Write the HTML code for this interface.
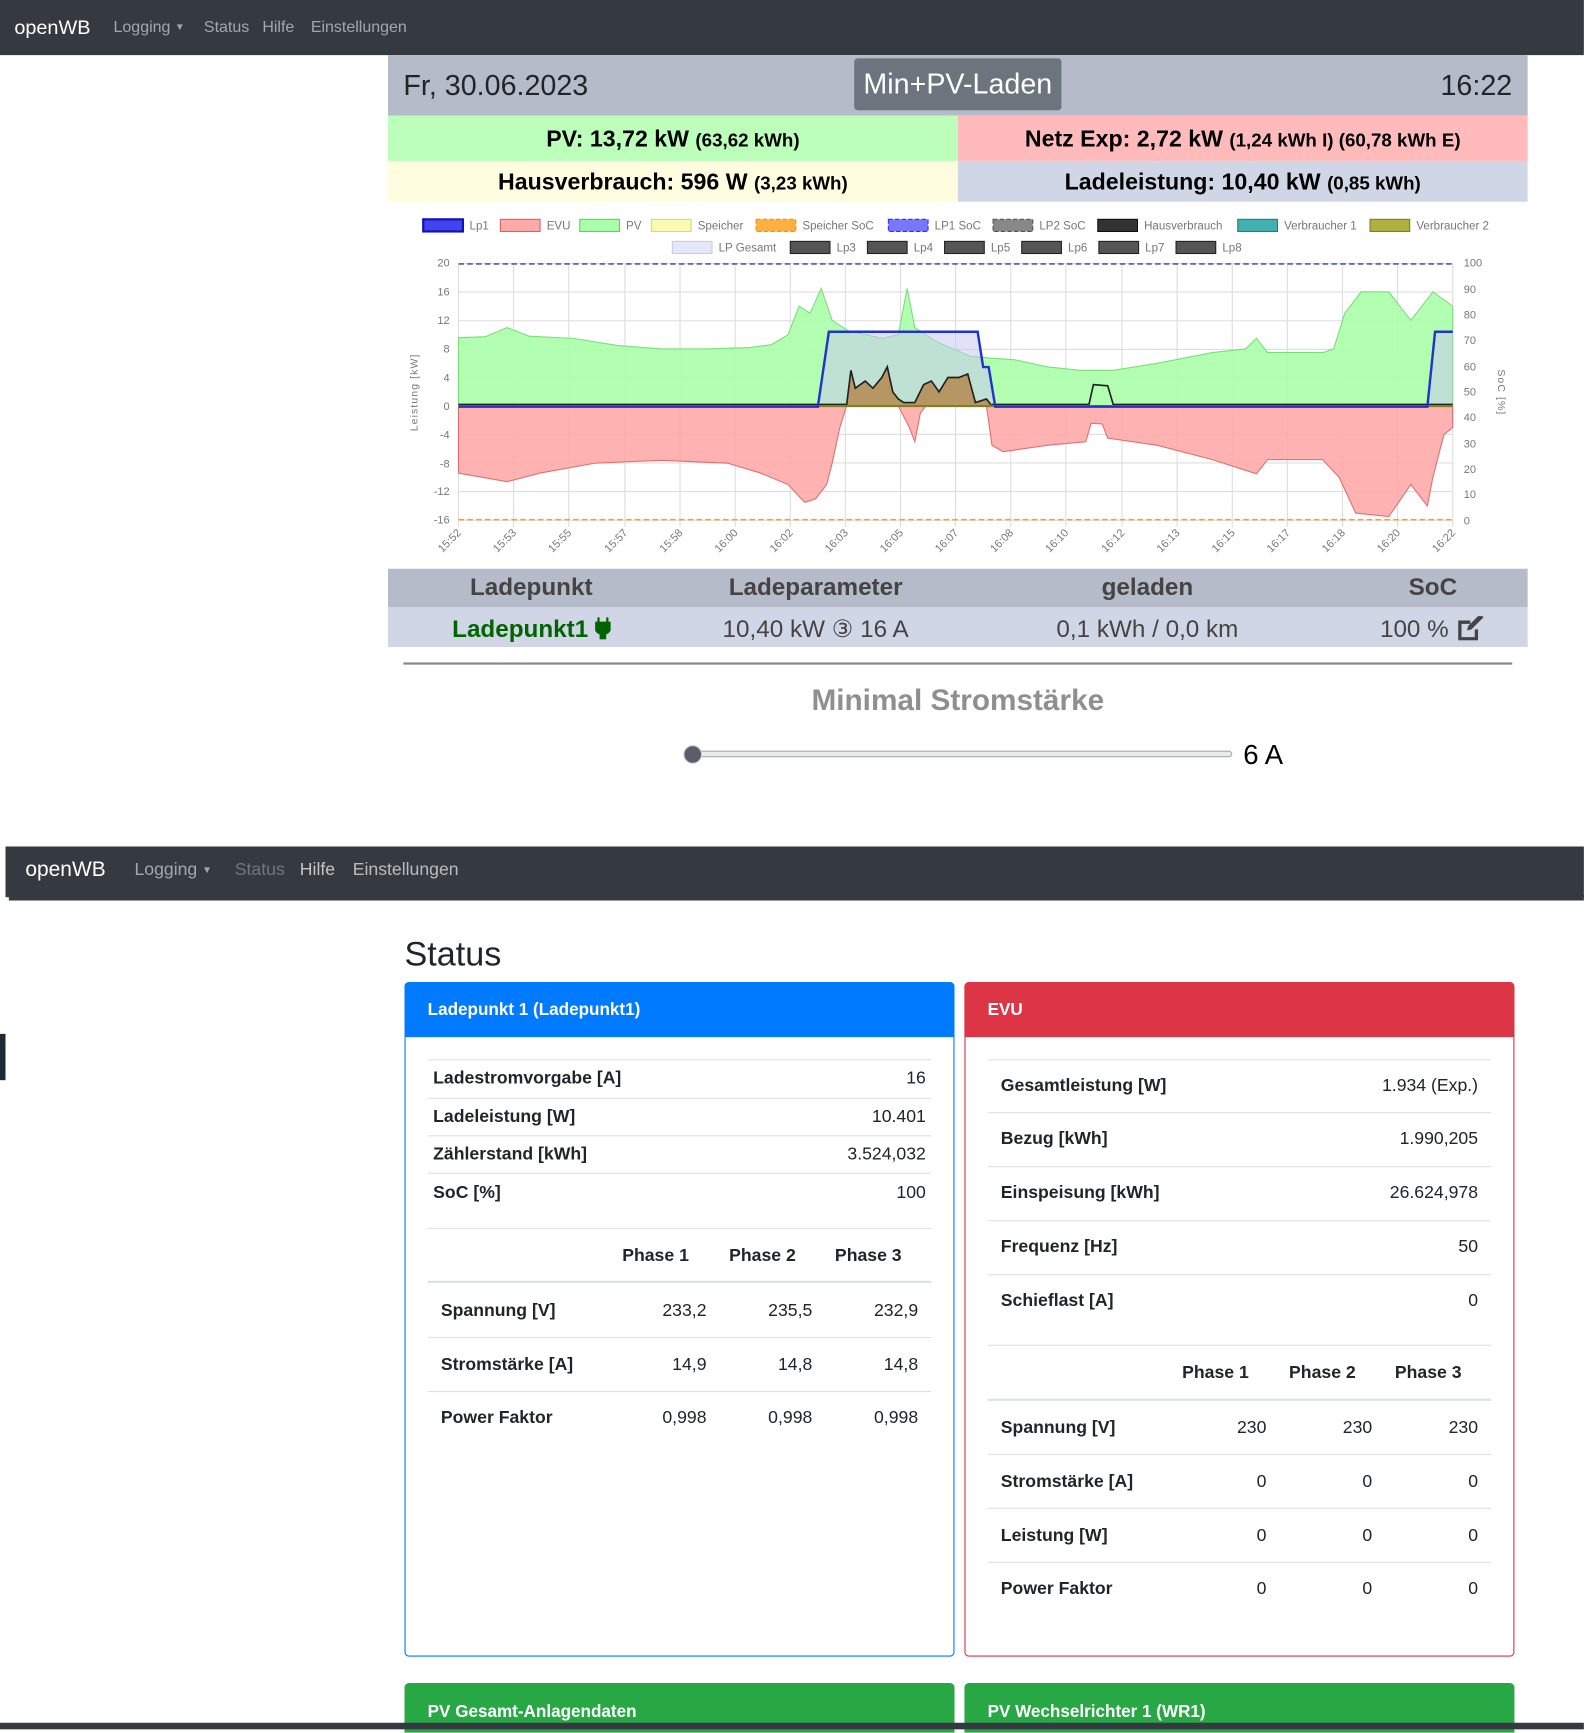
<!DOCTYPE html>
<html><head><meta charset="utf-8">
<style>
*{box-sizing:border-box;margin:0;padding:0}
html,body{width:1584px;height:1728px;overflow:hidden;background:#fff}
#w{position:absolute;left:0;top:0;width:1437px;height:1568px;transform:scale(1.1022);transform-origin:0 0;font-family:"Liberation Sans",sans-serif;color:#212529}
.a{position:absolute;white-space:nowrap}
.nav{position:absolute;background:#343a40}
.nl{color:rgba(255,255,255,.55)}
.c{text-align:center}
.b{font-weight:bold}
.ln{position:absolute;height:1px;background:#dee2e6}
.ln2{position:absolute;height:2px;background:#dee2e6}
.t{position:absolute;font-size:16px;white-space:nowrap}
.r{text-align:right}
</style></head><body><div id="w">

<!-- navbar 1 -->
<div class="nav" style="left:0;top:0;width:1437px;height:50px"></div>
<div class="a" style="left:13px;top:15px;font-size:18px;color:#fff">openWB</div>
<div class="a nl" style="left:103px;top:17px;font-size:14.5px">Logging <span style="font-size:9px;vertical-align:2px">▼</span></div>
<div class="a nl" style="left:185px;top:17px;font-size:14.5px">Status</div>
<div class="a nl" style="left:238px;top:17px;font-size:14.5px">Hilfe</div>
<div class="a nl" style="left:282px;top:17px;font-size:14.5px">Einstellungen</div>

<!-- header panel -->
<div class="a" style="left:352px;top:50px;width:1034px;height:55px;background:#b6bbc9"></div>
<div class="a" style="left:366px;top:62px;font-size:26px">Fr, 30.06.2023</div>
<div class="a" style="left:775px;top:53px;width:188px;height:47px;background:#6c757d;border-radius:3px;color:#fff;font-size:26px;text-align:center;line-height:47px">Min+PV-Laden</div>
<div class="a" style="left:1300px;top:62px;width:72px;text-align:right;font-size:26px">16:22</div>
<div class="a c b" style="left:352px;top:105px;width:517px;height:41px;background:#bbffbb;line-height:43px;font-size:21px;color:#000">PV: 13,72 kW <span style="font-size:17px">(63,62 kWh)</span></div>
<div class="a c b" style="left:869px;top:105px;width:517px;height:41px;background:#ffbbbb;line-height:43px;font-size:21px;color:#000">Netz Exp: 2,72 kW <span style="font-size:17px">(1,24 kWh I) (60,78 kWh E)</span></div>
<div class="a c b" style="left:352px;top:146px;width:517px;height:37px;background:#fffde0;line-height:40px;font-size:21px;color:#000">Hausverbrauch: 596 W <span style="font-size:17px">(3,23 kWh)</span></div>
<div class="a c b" style="left:869px;top:146px;width:517px;height:37px;background:#d0d6e5;line-height:40px;font-size:21px;color:#000">Ladeleistung: 10,40 kW <span style="font-size:17px">(0,85 kWh)</span></div>

<!-- chart -->
<svg class="a" style="left:0;top:0" width="1437" height="520" viewBox="0 0 1437 520" font-family="Liberation Sans" font-size="10" fill="#666">
<g font-size="10.5" fill="#777">
<rect x="384" y="199" width="36" height="11" fill="#4444ee" stroke="#1010c0" stroke-width="2"/><text x="426" y="208">Lp1</text>
<rect x="454" y="199" width="36" height="11" fill="#ffaaaa" stroke="#e06060"/><text x="496" y="208">EVU</text>
<rect x="526" y="199" width="36" height="11" fill="#aaffaa" stroke="#60d060"/><text x="568" y="208">PV</text>
<rect x="591" y="199" width="36" height="11" fill="#fbfbb0" stroke="#d8d880"/><text x="633" y="208">Speicher</text>
<rect x="686" y="199" width="36" height="11" fill="#ffb040" stroke="#f09020" stroke-dasharray="4,2"/><text x="728" y="208">Speicher SoC</text>
<rect x="806" y="199" width="36" height="11" fill="#7777ff" stroke="#3333dd" stroke-dasharray="4,2"/><text x="848" y="208">LP1 SoC</text>
<rect x="901" y="199" width="36" height="11" fill="#888" stroke="#555" stroke-dasharray="4,2"/><text x="943" y="208">LP2 SoC</text>
<rect x="996" y="199" width="36" height="11" fill="#333" stroke="#111"/><text x="1038" y="208">Hausverbrauch</text>
<rect x="1123" y="199" width="36" height="11" fill="#40b0b0" stroke="#208080"/><text x="1165" y="208">Verbraucher 1</text>
<rect x="1243" y="199" width="36" height="11" fill="#b0b040" stroke="#808020"/><text x="1285" y="208">Verbraucher 2</text>
<rect x="610" y="219" width="36" height="11" fill="#e6e6fa" stroke="#ccd"/><text x="652" y="228">LP Gesamt</text>
<g fill="#555" stroke="#222"><rect x="717" y="219" width="36" height="11"/><rect x="787" y="219" width="36" height="11"/><rect x="857" y="219" width="36" height="11"/><rect x="927" y="219" width="36" height="11"/><rect x="997" y="219" width="36" height="11"/><rect x="1067" y="219" width="36" height="11"/></g>
<text x="759" y="228">Lp3</text><text x="829" y="228">Lp4</text><text x="899" y="228">Lp5</text><text x="969" y="228">Lp6</text><text x="1039" y="228">Lp7</text><text x="1109" y="228">Lp8</text>
</g>
<g stroke="#ddd" stroke-width="1">
<path d="M416,239H1318M416,265H1318M416,291H1318M416,317H1318M416,342H1318M416,368H1318M416,394H1318M416,420H1318M416,446H1318M416,472H1318"/>
<path d="M416,239V478M466,239V478M516,239V478M567,239V478M617,239V478M667,239V478M717,239V478M767,239V478M817,239V478M867,239V478M917,239V478M967,239V478M1018,239V478M1068,239V478M1118,239V478M1168,239V478M1218,239V478M1268,239V478M1318,239V478"/>
</g>
<path d="M416,306.3L440,305.6L460,297.2L480,305L520,307L560,313.4L600,316.6L640,316.6L680,315.3L700,312.7L715,303.7L725,277.8L735,284.3L745,261.6L755,290.7L770,300.4L800,306.9L815,303.7L823,261.6L830,297.2L850,310.2L880,323.1L900,325L920,326.3L950,332.8L980,336L1010,336L1050,329.6L1100,319.9L1130,316.6L1140,306.9L1150,319.9L1200,319.9L1210,316.6L1220,284.3L1235,264.8L1260,264.8L1280,290.7L1300,264.8L1318,277.8L1318,368.4L416,368.4Z" fill="#aaffaa" fill-opacity=".9" stroke="#7ddc7d"/>
<path d="M416,429.2L460,437L490,429.2L540,420.2L600,417.6L660,420.2L690,429.2L715,439.6L730,455.8L740,452.5L750,439.6L755,420.2L762,387.8L768,368.4L815,368.4L825,387.8L830,400.8L835,374.9L840,368.4L895,368.4L900,404L910,409.8L950,404L985,400.8L990,384L1000,384.6L1005,397.5L1050,404L1100,417L1140,429.9L1150,417L1200,417L1215,433.1L1230,465.5L1260,468.7L1280,439.6L1295,459L1300,433.1L1310,394.3L1318,387.8L1318,368.4L416,368.4Z" fill="#ffaaaa" fill-opacity=".9" stroke="#e07070"/>
<path d="M742,368.4L752,300.4L887,300.4L892,332.8L897,332.8L903,368.4ZM1295,368.4L1302,300.4L1318,300.4L1318,368.4Z" fill="#c8c8f0" fill-opacity=".55"/>
<path d="M768,368.4L772,336L776,352.2L785,345.7L792,352.2L800,342.5L805,332.8L810,355.5L815,362L820,365.2L830,365.2L838,349L845,345.7L852,355.5L860,342.5L870,342.5L878,339.3L885,365.2L895,362L900,368.4Z" fill="#b58a50" fill-opacity=".85" stroke="#222" stroke-width="1.5"/>
<path d="M416,367L768,367M900,367L988,367L992,349L1005,350L1010,367L1318,367" fill="none" stroke="#222" stroke-width="1.5"/>
<path d="M416,368.4H1318" stroke="#808020" stroke-width="2"/>
<path d="M416,369L742,369L752,301L887,301L892,333L897,333L903,369L1295,369L1302,301L1318,301" fill="none" stroke="#2233cc" stroke-width="2.2"/>
<path d="M416,239.5H1318" stroke="#5555bb" stroke-width="1.5" stroke-dasharray="5,3"/>
<path d="M416,471.5H1318" stroke="#f0a040" stroke-width="1.5" stroke-dasharray="5,3"/>
<g text-anchor="end" fill="#777">
<text x="408" y="242">20</text><text x="408" y="268">16</text><text x="408" y="294">12</text><text x="408" y="320">8</text><text x="408" y="346">4</text><text x="408" y="372">0</text><text x="408" y="398">-4</text><text x="408" y="424">-8</text><text x="408" y="449">-12</text><text x="408" y="475">-16</text>
</g>
<g fill="#777">
<text x="1328" y="242">100</text><text x="1328" y="266">90</text><text x="1328" y="289">80</text><text x="1328" y="312">70</text><text x="1328" y="336">60</text><text x="1328" y="359">50</text><text x="1328" y="382">40</text><text x="1328" y="406">30</text><text x="1328" y="429">20</text><text x="1328" y="452">10</text><text x="1328" y="476">0</text>
</g>
<text transform="translate(379,356) rotate(-90)" text-anchor="middle" fill="#777" font-size="9.5" letter-spacing="1">Leistung [kW]</text>
<text transform="translate(1359,356) rotate(90)" text-anchor="middle" fill="#777" font-size="9.5" letter-spacing="1">SoC [%]</text>
<g fill="#777" text-anchor="end" font-size="10">
<text transform="translate(419,484) rotate(-45)">15:52</text><text transform="translate(469,484) rotate(-45)">15:53</text><text transform="translate(519,484) rotate(-45)">15:55</text><text transform="translate(570,484) rotate(-45)">15:57</text><text transform="translate(620,484) rotate(-45)">15:58</text><text transform="translate(670,484) rotate(-45)">16:00</text><text transform="translate(720,484) rotate(-45)">16:02</text><text transform="translate(770,484) rotate(-45)">16:03</text><text transform="translate(820,484) rotate(-45)">16:05</text><text transform="translate(870,484) rotate(-45)">16:07</text><text transform="translate(920,484) rotate(-45)">16:08</text><text transform="translate(970,484) rotate(-45)">16:10</text><text transform="translate(1021,484) rotate(-45)">16:12</text><text transform="translate(1071,484) rotate(-45)">16:13</text><text transform="translate(1121,484) rotate(-45)">16:15</text><text transform="translate(1171,484) rotate(-45)">16:17</text><text transform="translate(1221,484) rotate(-45)">16:18</text><text transform="translate(1271,484) rotate(-45)">16:20</text><text transform="translate(1321,484) rotate(-45)">16:22</text>
</g>
</svg>

<!-- ladepunkt table -->
<div class="a" style="left:352px;top:516px;width:1034px;height:35px;background:#b6bbc9"></div>
<div class="a" style="left:352px;top:551px;width:1034px;height:36px;background:#d0d6e5"></div>
<div class="a c b" style="left:382px;top:520px;width:200px;font-size:22px;color:#444">Ladepunkt</div>
<div class="a c b" style="left:620px;top:520px;width:240px;font-size:22px;color:#444">Ladeparameter</div>
<div class="a c b" style="left:941px;top:520px;width:200px;font-size:22px;color:#444">geladen</div>
<div class="a c b" style="left:1250px;top:520px;width:100px;font-size:22px;color:#444">SoC</div>
<div class="a c b" style="left:382px;top:558px;width:200px;font-size:22px;color:#006400">Ladepunkt1 <svg width="14" height="20" viewBox="0 0 14 20" style="vertical-align:-2px"><path d="M3,0v5M11,0v5M0,5h14v4a7,7 0 0 1 -5,6v5h-4v-5a7,7 0 0 1 -5,-6z" fill="#006400" stroke="#006400" stroke-width="2"/></svg></div>
<div class="a c" style="left:600px;top:558px;width:280px;font-size:22px;color:#444">10,40 kW ③ 16 A</div>
<div class="a c" style="left:921px;top:558px;width:240px;font-size:22px;color:#444">0,1 kWh / 0,0 km</div>
<div class="a" style="left:1252px;top:558px;font-size:22px;color:#444">100 % <svg width="26" height="22" viewBox="0 0 26 22" style="vertical-align:-3px"><path d="M2,4h11v3h-8v12h12v-7h3v10h-18z" fill="#444"/><path d="M10,13l1,-4l11,-11l3,3l-11,11z" fill="#444"/></svg></div>
<div class="a" style="left:366px;top:601px;width:1006px;height:2px;background:#888"></div>
<div class="a c b" style="left:600px;top:620px;width:538px;font-size:27px;color:#8f8f8f">Minimal Stromstärke</div>
<div class="a" style="left:628px;top:681px;width:490px;height:6px;border:1px solid #aaa;border-radius:3px;background:#e9ecef"></div>
<div class="a" style="left:620px;top:676px;width:17px;height:17px;border-radius:50%;background:#5a5e6a;border:1px solid #ccc"></div>
<div class="a" style="left:1128px;top:671px;font-size:25px;color:#000">6 A</div>

<!-- navbar 2 -->
<div class="nav" style="left:5px;top:768px;width:1432px;height:46px"></div>
<div class="nav" style="left:8px;top:812px;width:1429px;height:5px"></div>
<div class="a" style="left:23px;top:779px;font-size:19px;color:#fff">openWB</div>
<div class="a nl" style="left:122px;top:781px;font-size:16px">Logging <span style="font-size:9px;vertical-align:2px">▼</span></div>
<div class="a" style="left:213px;top:781px;font-size:16px;color:rgba(255,255,255,.3)">Status</div>
<div class="a nl" style="left:272px;top:781px;font-size:16px;color:rgba(255,255,255,.7)">Hilfe</div>
<div class="a nl" style="left:320px;top:781px;font-size:16px;color:rgba(255,255,255,.65)">Einstellungen</div>
<div class="nav" style="left:0;top:938px;width:5px;height:42px;background:#1e2a33"></div>

<div class="a" style="left:367px;top:848px;font-size:31px;color:#212529">Status</div>

<!-- left card -->
<div class="a" style="left:367px;top:891px;width:499px;height:612px;border:1px solid #007bff;border-radius:4px"></div>
<div class="a b" style="left:367px;top:891px;width:499px;height:50px;background:#007bff;border-radius:4px 4px 0 0;color:#fff;font-size:15.5px;line-height:52px;padding-left:21px">Ladepunkt 1 (Ladepunkt1)</div>
<div class="ln" style="left:388px;top:961px;width:457px"></div>
<div class="ln" style="left:388px;top:996px;width:457px"></div>
<div class="ln" style="left:388px;top:1030px;width:457px"></div>
<div class="ln" style="left:388px;top:1064px;width:457px"></div>
<div class="t b" style="left:393px;top:970px">Ladestromvorgabe [A]</div><div class="t r" style="left:700px;width:140px;top:970px">16</div>
<div class="t b" style="left:393px;top:1005px">Ladeleistung [W]</div><div class="t r" style="left:700px;width:140px;top:1005px">10.401</div>
<div class="t b" style="left:393px;top:1039px">Zählerstand [kWh]</div><div class="t r" style="left:700px;width:140px;top:1039px">3.524,032</div>
<div class="t b" style="left:393px;top:1074px">SoC [%]</div><div class="t r" style="left:700px;width:140px;top:1074px">100</div>
<div class="ln" style="left:388px;top:1114px;width:457px"></div>
<div class="t b r" style="left:525px;width:100px;top:1131px">Phase 1</div>
<div class="t b r" style="left:622px;width:100px;top:1131px">Phase 2</div>
<div class="t b r" style="left:718px;width:100px;top:1131px">Phase 3</div>
<div class="ln2" style="left:388px;top:1162px;width:457px"></div>
<div class="t b" style="left:400px;top:1181px">Spannung [V]</div><div class="t r" style="left:541px;width:100px;top:1181px">233,2</div><div class="t r" style="left:637px;width:100px;top:1181px">235,5</div><div class="t r" style="left:733px;width:100px;top:1181px">232,9</div>
<div class="ln" style="left:388px;top:1213px;width:457px"></div>
<div class="t b" style="left:400px;top:1230px">Stromstärke [A]</div><div class="t r" style="left:541px;width:100px;top:1230px">14,9</div><div class="t r" style="left:637px;width:100px;top:1230px">14,8</div><div class="t r" style="left:733px;width:100px;top:1230px">14,8</div>
<div class="ln" style="left:388px;top:1262px;width:457px"></div>
<div class="t b" style="left:400px;top:1278px">Power Faktor</div><div class="t r" style="left:541px;width:100px;top:1278px">0,998</div><div class="t r" style="left:637px;width:100px;top:1278px">0,998</div><div class="t r" style="left:733px;width:100px;top:1278px">0,998</div>

<!-- right card -->
<div class="a" style="left:875px;top:891px;width:499px;height:612px;border:1px solid #dc3545;border-radius:4px"></div>
<div class="a b" style="left:875px;top:891px;width:499px;height:50px;background:#dc3545;border-radius:4px 4px 0 0;color:#fff;font-size:15.5px;line-height:52px;padding-left:21px">EVU</div>
<div class="ln" style="left:896px;top:961px;width:457px"></div>
<div class="ln" style="left:896px;top:1009px;width:457px"></div>
<div class="ln" style="left:896px;top:1058px;width:457px"></div>
<div class="ln" style="left:896px;top:1107px;width:457px"></div>
<div class="ln" style="left:896px;top:1156px;width:457px"></div>
<div class="t b" style="left:908px;top:977px">Gesamtleistung [W]</div><div class="t r" style="left:1141px;width:200px;top:977px">1.934 (Exp.)</div>
<div class="t b" style="left:908px;top:1025px">Bezug [kWh]</div><div class="t r" style="left:1141px;width:200px;top:1025px">1.990,205</div>
<div class="t b" style="left:908px;top:1074px">Einspeisung [kWh]</div><div class="t r" style="left:1141px;width:200px;top:1074px">26.624,978</div>
<div class="t b" style="left:908px;top:1123px">Frequenz [Hz]</div><div class="t r" style="left:1141px;width:200px;top:1123px">50</div>
<div class="t b" style="left:908px;top:1172px">Schieflast [A]</div><div class="t r" style="left:1141px;width:200px;top:1172px">0</div>
<div class="ln" style="left:896px;top:1220px;width:457px"></div>
<div class="t b r" style="left:1033px;width:100px;top:1237px">Phase 1</div>
<div class="t b r" style="left:1130px;width:100px;top:1237px">Phase 2</div>
<div class="t b r" style="left:1226px;width:100px;top:1237px">Phase 3</div>
<div class="ln2" style="left:896px;top:1269px;width:457px"></div>
<div class="t b" style="left:908px;top:1287px">Spannung [V]</div><div class="t r" style="left:1049px;width:100px;top:1287px">230</div><div class="t r" style="left:1145px;width:100px;top:1287px">230</div><div class="t r" style="left:1241px;width:100px;top:1287px">230</div>
<div class="ln" style="left:896px;top:1319px;width:457px"></div>
<div class="t b" style="left:908px;top:1336px">Stromstärke [A]</div><div class="t r" style="left:1049px;width:100px;top:1336px">0</div><div class="t r" style="left:1145px;width:100px;top:1336px">0</div><div class="t r" style="left:1241px;width:100px;top:1336px">0</div>
<div class="ln" style="left:896px;top:1368px;width:457px"></div>
<div class="t b" style="left:908px;top:1385px">Leistung [W]</div><div class="t r" style="left:1049px;width:100px;top:1385px">0</div><div class="t r" style="left:1145px;width:100px;top:1385px">0</div><div class="t r" style="left:1241px;width:100px;top:1385px">0</div>
<div class="ln" style="left:896px;top:1417px;width:457px"></div>
<div class="t b" style="left:908px;top:1433px">Power Faktor</div><div class="t r" style="left:1049px;width:100px;top:1433px">0</div><div class="t r" style="left:1145px;width:100px;top:1433px">0</div><div class="t r" style="left:1241px;width:100px;top:1433px">0</div>

<!-- bottom cards -->
<div class="a b" style="left:367px;top:1527px;width:499px;height:45px;background:#28a745;border-radius:4px 4px 0 0;color:#fff;font-size:15.5px;padding:18px 0 0 21px">PV Gesamt-Anlagendaten</div>
<div class="a b" style="left:875px;top:1527px;width:499px;height:45px;background:#28a745;border-radius:4px 4px 0 0;color:#fff;font-size:15.5px;padding:18px 0 0 21px">PV Wechselrichter 1 (WR1)</div>
<div class="nav" style="left:0;top:1563px;width:1437px;height:6px"></div>
</div></body></html>
